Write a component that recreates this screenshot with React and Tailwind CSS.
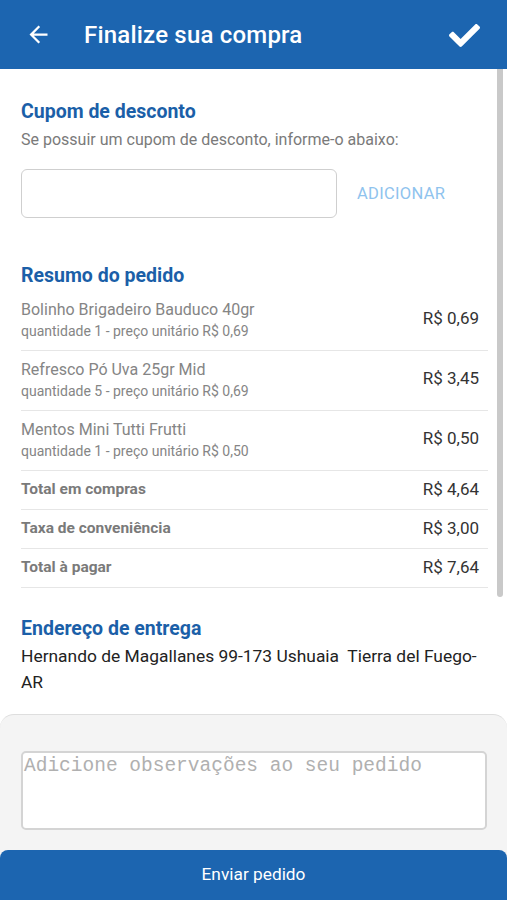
import { useState } from "react"
import { FaCheck } from "react-icons/fa"

const items = [
  { name: "Bolinho Brigadeiro Bauduco 40gr", qty: 1, unit: "0,69", total: "0,69" },
  { name: "Refresco Pó Uva 25gr Mid", qty: 5, unit: "0,69", total: "3,45" },
  { name: "Mentos Mini Tutti Frutti", qty: 1, unit: "0,50", total: "0,50" },
]

const totals = [
  { label: "Total em compras", value: "4,64" },
  { label: "Taxa de conveniência", value: "3,00" },
  { label: "Total à pagar", value: "7,64" },
]

export default function App() {
  const [coupon, setCoupon] = useState("")
  const [notes, setNotes] = useState("")

  return (
    <div className="h-[900px] flex flex-col bg-white overflow-hidden font-['Roboto',sans-serif]">
      {/* Header */}
      <div className="h-[69px] shrink-0 bg-[#1c65b0] flex items-center text-white">
        <div className="w-[84px] flex justify-center pr-[8px]">
          <svg width="27" height="27" viewBox="0 0 24 24" fill="currentColor">
            <path d="M20 11H7.83l5.59-5.59L12 4l-8 8 8 8 1.41-1.41L7.83 13H20v-2z" />
          </svg>
        </div>
        <h1 className="flex-1 text-[24px] font-medium tracking-[0.2px]">Finalize sua compra</h1>
        <div className="pr-[27px] pt-[1px]">
          <FaCheck size={31} />
        </div>
      </div>

      {/* Content */}
      <div className="relative flex-1 pl-[21px] pr-[19px]">
        <div className="absolute right-[4px] top-0 w-[6px] h-[528px] bg-[#c9c9c9] rounded-b-[3px]" />

        <h2 className="mt-[31px] text-[19.5px] font-bold text-[#1b5fa8] leading-[24px]">Cupom de desconto</h2>
        <p className="mt-[6px] text-[16px] text-[#7a7a7a] leading-[20px]">
          Se possuir um cupom de desconto, informe-o abaixo:
        </p>
        <div className="mt-[19px] flex items-center">
          <input
            value={coupon}
            onChange={(e) => setCoupon(e.target.value)}
            className="w-[316px] h-[49px] border border-[#cfcfcf] rounded-[6px] px-3 outline-none"
          />
          <button className="ml-[20px] mt-[2px] text-[16.5px] text-[#8fc3ee] tracking-[0.3px]">ADICIONAR</button>
        </div>

        <h2 className="mt-[46px] text-[19.5px] font-bold text-[#1b5fa8] leading-[24px]">Resumo do pedido</h2>
        <div className="mt-[3px]">
          {items.map((item) => (
            <div key={item.name} className="h-[60px] flex items-center justify-between border-b border-[#e6e6e6] pr-[9px]">
              <div className="flex flex-col">
                <span className="text-[16px] text-[#858585] leading-[20px]">{item.name}</span>
                <span className="text-[14px] text-[#858585] leading-[20px] mt-[1px]">
                  quantidade {item.qty} - preço unitário R$ {item.unit}
                </span>
              </div>
              <span className="text-[17px] text-[#333] mb-[4px]">R$ {item.total}</span>
            </div>
          ))}
          {totals.map((t) => (
            <div key={t.label} className="h-[39px] flex items-center justify-between border-b border-[#e6e6e6] pr-[9px]">
              <span className="text-[15.5px] font-bold text-[#7a7a7a] mb-[1px]">{t.label}</span>
              <span className="text-[17px] text-[#333]">R$ {t.value}</span>
            </div>
          ))}
        </div>

        <h2 className="mt-[29px] text-[19.5px] font-bold text-[#1b5fa8] leading-[24px]">Endereço de entrega</h2>
        <p className="mt-[2px] text-[17.4px] text-[#222] leading-[26px] pr-[8px]">
          Hernando de Magallanes 99-173 Ushuaia&nbsp; Tierra del Fuego- AR
        </p>
      </div>

      {/* Bottom panel */}
      <div className="shrink-0 bg-[#f4f4f4] border-t border-[#dedede] rounded-t-[14px]">
        <div className="px-[21px] pt-[36px] pb-[20px]">
          <textarea
            value={notes}
            onChange={(e) => setNotes(e.target.value)}
            placeholder="Adicione observações ao seu pedido"
            className="block w-[466px] h-[79px] bg-white border-2 border-[#d4d4d4] rounded-[5px] px-[1px] py-0 resize-none outline-none font-['Liberation_Mono',monospace] text-[19.5px] leading-[26px] placeholder:text-[#b0b0b0]"
          />
        </div>
        <button className="w-full h-[50px] bg-[#1c65b0] rounded-t-[8px] text-white text-[17.3px]">Enviar pedido</button>
      </div>
    </div>
  )
}
